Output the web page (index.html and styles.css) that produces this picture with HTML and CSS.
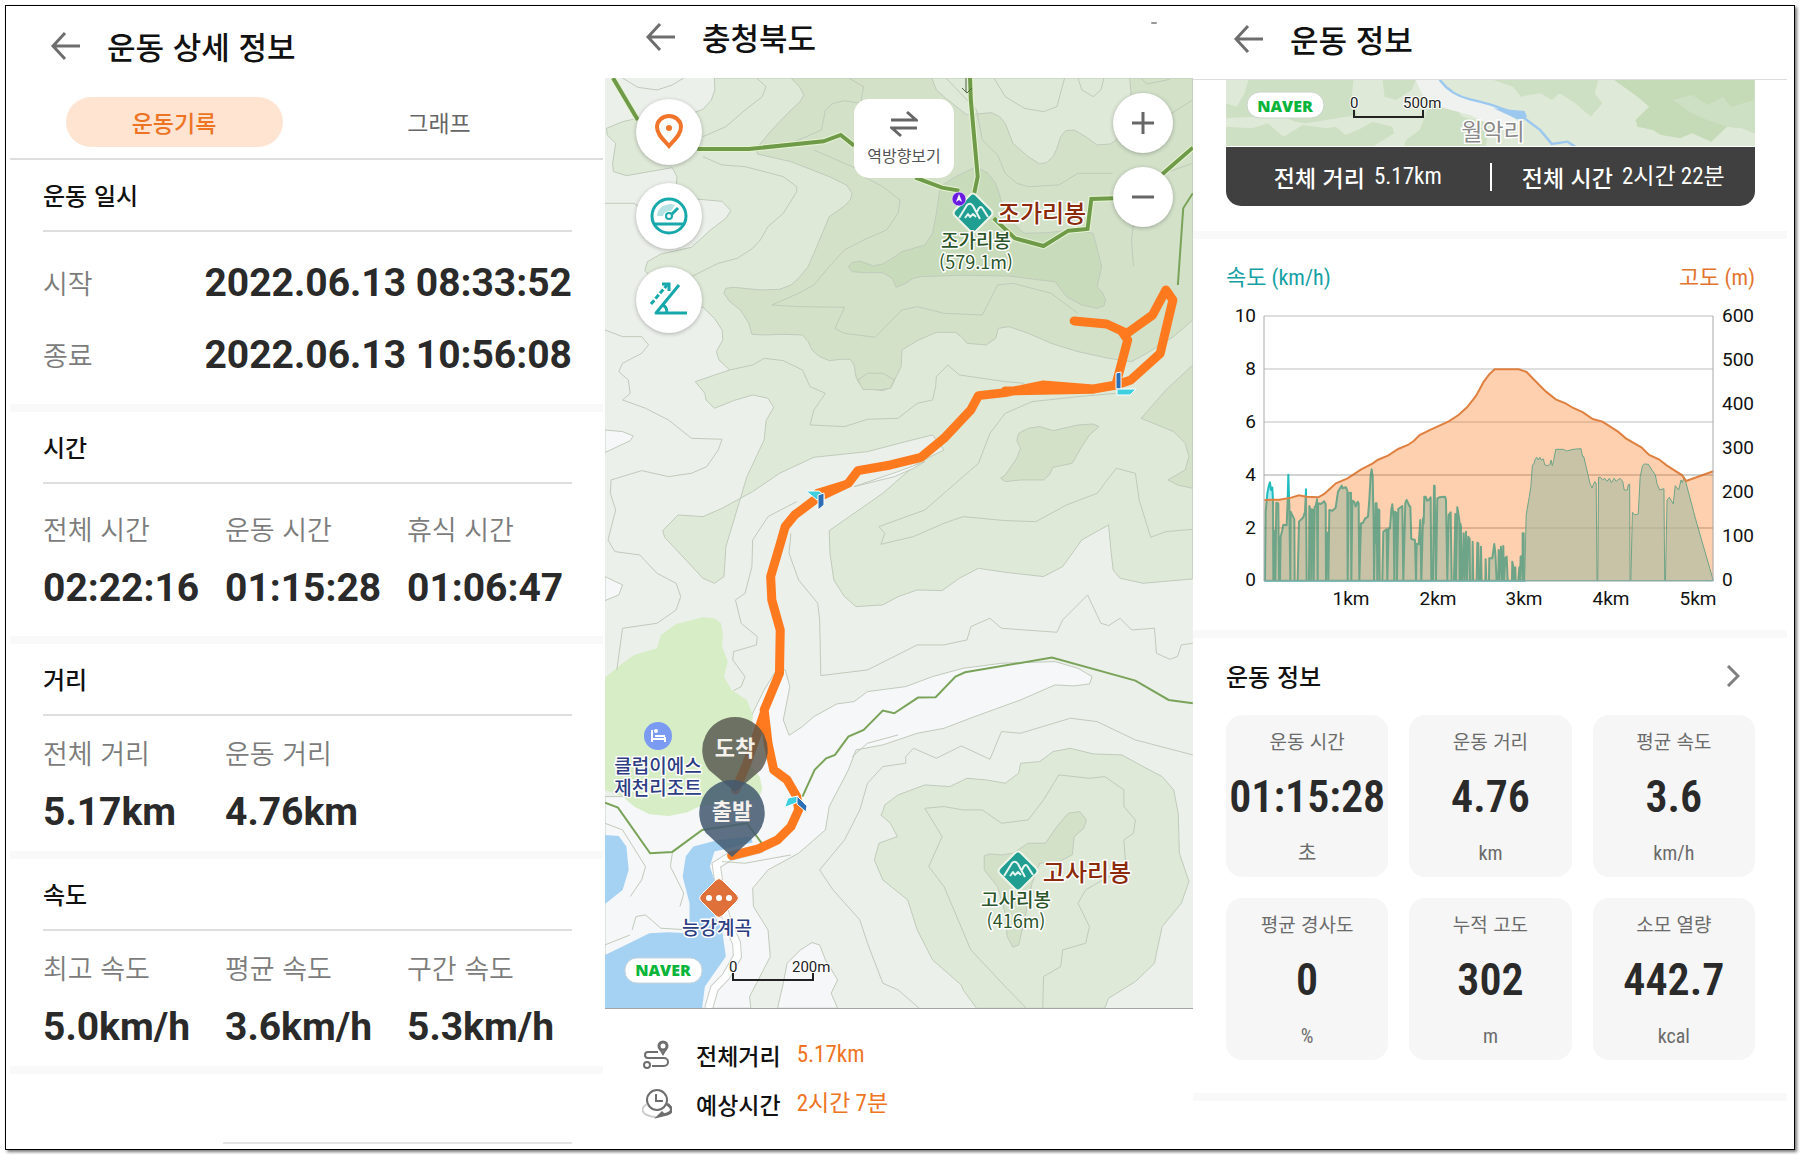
FILE: index.html
```html
<!DOCTYPE html>
<html lang="ko">
<head>
<meta charset="utf-8">
<title>운동 상세 정보</title>
<meta name="viewport" content="width=device-width, initial-scale=1">
<link rel="stylesheet" href="styles.css">
</head>
<body>
<svg class="defs" width="0" height="0" aria-hidden="true">
  <symbol id="back" viewBox="0 0 30 30"><path d="M29 15H2M14 2 2 15l12 13" fill="none" stroke="#6e6e6e" stroke-width="3"/></symbol>
  <symbol id="peak" viewBox="0 0 42 42">
    <path d="M18 3Q21 0 24 3L39 18Q42 21 39 24L24 39Q21 42 18 39L3 24Q0 21 3 18Z" fill="#1f9e91" stroke="#eef5e8" stroke-width="2"/>
    <path d="M7 26 15 13Q18 10 21 14L28 27M13 26l3-4 2 3 3-3 3 3M25 20Q28 12 31 17L36 25" fill="none" stroke="#e8f5f0" stroke-width="2" stroke-linejoin="round"/>
  </symbol>
</svg>
<main class="frame">
  <section class="panel detail">
    <header class="bar">
      <button class="back" type="button" aria-label="뒤로"><svg><use href="#back"/></svg></button>
      <h1>운동 상세 정보</h1>
    </header>
    <nav class="tabs">
      <button class="tab active" type="button">운동기록</button>
      <button class="tab" type="button">그래프</button>
    </nav>
    <section class="block">
      <h2>운동 일시</h2>
      <dl class="dates">
        <div><dt>시작</dt><dd>2022.06.13 08:33:52</dd></div>
        <div><dt>종료</dt><dd>2022.06.13 10:56:08</dd></div>
      </dl>
    </section>
    <section class="block">
      <h2>시간</h2>
      <dl class="stats roomy">
        <div><dt>전체 시간</dt><dd>02:22:16</dd></div>
        <div><dt>운동 시간</dt><dd>01:15:28</dd></div>
        <div><dt>휴식 시간</dt><dd>01:06:47</dd></div>
      </dl>
    </section>
    <section class="block">
      <h2>거리</h2>
      <dl class="stats">
        <div><dt>전체 거리</dt><dd>5.17km</dd></div>
        <div><dt>운동 거리</dt><dd>4.76km</dd></div>
      </dl>
    </section>
    <section class="block">
      <h2>속도</h2>
      <dl class="stats">
        <div><dt>최고 속도</dt><dd>5.0km/h</dd></div>
        <div><dt>평균 속도</dt><dd>3.6km/h</dd></div>
        <div><dt>구간 속도</dt><dd>5.3km/h</dd></div>
      </dl>
    </section>
    <div class="next"></div>
  </section>

  <section class="panel course">
    <header class="bar">
      <button class="back" type="button" aria-label="뒤로"><svg><use href="#back"/></svg></button>
      <h1>충청북도</h1>
      <span class="speck"></span>
    </header>
    <div class="map">
      <svg class="canvas" viewBox="0 0 588 930" preserveAspectRatio="xMidYMid slice">
        <rect width="588" height="930" fill="#ecf0ea"/>
        <g transform="translate(-5.4 -78) scale(.3827 .3333)" class="terrain">
          <path class="mid" d="M300 234 301 270 292 300 270 328 230 345 100 355 60 365 18 385 20 405 42 430 34 490 36 515 70 527 130 515 190 503 202 530 200 570 250 597 320 604 343 632 330 655 290 690 240 742 160 762 125 785 118 812 150 850 230 905 270 922 300 955 320 990 322 1020 305 1055 312 1080 340 1110 250 1145 275 1180 278 1200 300 1225 350 1202 400 1185 440 1195 455 1222 435 1262 430 1320 385 1430 330 1640 325 1730 300 1750 270 1735 170 1612 165 1592 205 1545 270 1550 320 1525 400 1475 470 1420 560 1372 700 1355 800 1325 870 1305 900 1350 830 1390 740 1480 640 1560 600 1592 602 1660 612 1740 640 1790 670 1820 740 1815 780 1790 830 1770 895 1772 940 1735 990 1705 1060 1717 1160 1730 1210 1700 1260 1620 1330 1575 1336 1650 1342 1710 1360 1735 1420 1750 1550 1737V234Z"/>
          <path class="dark" d="M500 234 522 260 534 285 524 305 500 330 450 390 410 445 412 462 500 485 600 530 645 555 660 580 655 600 640 618 600 650 582 700 560 760 545 800 520 835 500 855 470 868 420 870 350 862 330 865 325 880 340 905 368 930 390 970 398 1003 430 1005 480 1003 530 1005 545 1025 555 1050 575 1070 600 1082 630 1078 655 1078 665 1095 670 1130 678 1150 700 1165 740 1172 762 1162 775 1130 788 1100 790 1050 830 1022 880 997 930 997 945 1010 960 1030 1010 1035 1035 1015 1042 985 1070 980 1120 1000 1180 1030 1250 1055 1330 1075 1390 1085 1430 1060 1500 1010 1550 960V234H1385L1390 300 1380 370 1360 410 1335 432 1300 435 1270 410 1240 390 1218 392 1205 410 1195 445 1185 470 1168 488 1150 492 1120 470 1080 430 1070 400 1060 370 1045 350 1025 338 985 342 960 345 910 300 880 270 868 234Z"/>
          <path class="darker" d="M650 800 660 788 680 783 715 798 740 792 765 775 790 755 850 735 870 700 880 640 890 560 930 530 985 500 1015 520 1035 550 1055 620 1075 665 1110 700 1170 698 1240 690 1290 700 1312 800 1300 860 1315 880 1322 900 1318 918 1300 925 1260 915 1220 890 1190 845 1150 840 1070 828 940 826 840 830 820 835 800 850 775 862 765 835 740 818 690 818 660 815Z"/>
          <path class="dark" d="M1550 1095 1480 1170 1415 1255 1500 1295 1530 1330 1540 1370 1530 1410 1485 1440 1510 1455 1550 1465ZM675 1140 688 1168 730 1170 760 1165 770 1140 740 1120 700 1120ZM1090 1322 1095 1300 1120 1285 1150 1280 1185 1292 1250 1275 1290 1272 1305 1280 1280 1305 1260 1340 1235 1390 1185 1402 1175 1425 1160 1440 1100 1440 1060 1445 1048 1435 1060 1425 1090 1375 1100 1345Z"/>
          <path class="valley" d="M462 2010 485 2010 497 2060 480 2160 495 2206 530 2180 560 2150 620 2112 665 2105 700 2075 800 2060 870 2030 950 2005 1050 1990 1190 1985 1250 2005 1287 2030 1280 2052 1240 2058 1190 2055 1100 2100 980 2150 900 2185 830 2200 740 2235 670 2250 650 2310 600 2420 590 2490 520 2560 440 2610 400 2665 402 2720 440 2790 446 2870 410 2950 392 2990 395 3025H14V2390H330L400 2140 430 2070ZM555 2828 525 2850 490 2890 480 2950 465 3025H622L605 2980 622 2940 590 2880 575 2835ZM14 1290 60 1295 88 1308 80 1322 14 1358ZM14 1730 60 1755 50 1785 14 1802ZM665 1460 780 1415 850 1385 820 1405 770 1430Z"/>
          <path class="mid" d="M740 2435 745 2415 780 2385 850 2355 915 2360 960 2335 1010 2340 1060 2350 1095 2320 1100 2290 1150 2285 1185 2255 1230 2245 1290 2262 1365 2265 1420 2300 1470 2330 1500 2370 1512 2440 1515 2560 1540 2645 1520 2710 1470 2780 1455 2860 1450 2890 1400 2945 1330 2995 1320 3025H985L950 2970 945 2955 870 2880 830 2790 805 2700 740 2640 718 2580 730 2530 778 2510 760 2470 735 2445Z"/>
          <path class="dark" d="M1005 2568 1020 2562 1050 2565 1080 2560 1120 2530 1165 2530 1195 2480 1225 2440 1255 2435 1272 2460 1265 2485 1240 2510 1235 2565 1200 2585 1150 2590 1130 2650 1110 2760 1095 2835 1080 2842 1065 2810 1060 2740 1040 2660 1005 2610Z"/>
          <path class="resort" d="M270 1852 300 1855 317 1870 322 1900 320 1940 335 1985 325 2030 345 2070 385 2100 400 2145 395 2300 418 2330 425 2365 415 2400 260 2420 230 2437 180 2448 130 2443 90 2420 60 2390 14 2370V2033L60 1990 90 1965 150 1945 160 1905 200 1872Z"/>
          <path class="water" d="M14 2505 50 2508 70 2540 76 2610 60 2670 14 2712ZM395 2510 400 2528 300 2555 288 2600 300 2640 280 2700 320 2790 330 2870 275 2960 268 3025H14V2865L60 2840 130 2800 180 2797 235 2800V2710L217 2630 225 2570 245 2540 310 2520Z"/>
          <path d="M425 2545 340 2570 305 2595 318 2700 335 2770 358 2830 360 2870 330 2930 300 2965 285 3025" fill="none" stroke="#c8cdc5" stroke-width="9" vector-effect="non-scaling-stroke"/>
          <path d="M425 2545 340 2570 305 2595 318 2700 335 2770 358 2830 360 2870 330 2930 300 2965 285 3025" fill="none" stroke="#fff" stroke-width="7" vector-effect="non-scaling-stroke"/>
          <g class="contour">
            <path d="M60 234 100 262 150 270 190 255 220 234M410 234 435 260 425 290 380 330 330 380 270 410M650 234 690 260 682 310 640 302 610 310 590 330 580 390 500 430 440 440M1030 234 1060 290 1110 325 1160 335 1195 320 1215 234M1250 234 1260 270 1290 290 1310 270 1318 234M1415 234 1430 252 1490 238M905 234 985 330 1000 420 1040 465 1060 520 1090 550 1120 560 1200 555 1250 520 1340 520M1550 300 1480 350M1550 490 1450 530 1400 620 1390 720 1395 800M270 470 320 495 380 500 480 530 515 560 515 575 480 640 440 680 420 720 400 745 360 775 310 790 240 830M560 450 640 490 700 520M690 530 740 560 785 600 780 640 750 690 690 720 640 750 600 800 560 855 520 880 450 915 520 920 640 922 615 985 640 1000 720 1012 790 930 830 920 900 940 1000 945 1040 855 1080 850 1180 880 1250 940M14 610 90 610 130 640 170 620M14 990 60 1010 110 1010 128 1035 110 1060 60 1090 50 1115 75 1140 80 1180 60 1200 120 1225 180 1260 240 1315 320 1318 310 1350 280 1400 240 1420 180 1430 110 1412 30 1440 28 1480 42 1530 22 1620 40 1655 105 1665 150 1720 200 1750 212 1790 200 1830 150 1870 60 1885 45 2010M340 1110 400 1095 430 1075 480 1082 530 1110 550 1160 590 1180 560 1230 550 1275 640 1280 700 1258 780 1255 830 1210 870 1200 878 1160 880 1130 910 1095 940 1125 1060 1145 1110 1150M1350 1180 1250 1190 1130 1205 1060 1240 1020 1300 990 1390 930 1450 850 1530 730 1580 745 1600 735 1633 820 1610 900 1570 950 1550 1060 1562 1140 1565 1220 1515 1300 1480 1350 1405 1400 1420 1410 1500 1440 1612 1480 1595 1550 1588M515 1505 440 1550 400 1620 398 1700 380 1780 355 1800 370 1870 412 1910 410 1935 350 1955 348 1980 380 2030 370 2060 350 2072M500 1600 495 1660 520 1740 570 1810 575 1860 578 2027 700 2010 830 1935 900 1935 960 1920 970 1880 1020 1855 1050 1885 1195 1897 1210 1860 1275 1785 1310 1870 1330 1877 1360 1855 1390 1890 1450 1885 1455 1960 1490 1978 1510 1970 1520 1935 1550 1930M660 2270 700 2230 780 2205M800 2270 820 2245 880 2275 945 2238 1020 2278 1050 2195 1100 2200 1230 2155 1300 2165 1400 2220 1550 2265M800 2270 800 2290 740 2300 700 2350 680 2430 640 2520 575 2610 610 2670 680 2760 700 2830 740 2950 780 2970 835 3025M850 2425 900 2420 950 2430 1000 2430 1050 2470 1120 2460 1160 2400 1200 2325 1280 2335 1320 2330 1370 2370 1370 2420 1400 2460 1395 2500 1370 2520 1375 2600 1270 2670 1250 2710 1280 2780 1270 2830 1210 2850 1205 2900 1160 2930 1158 3025M850 2425 895 2510 860 2600 900 2660 970 2850 1060 2960 1115 3025M14 2470 60 2490 120 2600 110 2640 80 2690M85 2790 95 2750 120 2745 160 2785 235 2790M14 2835 80 2805M190 2560 185 2600 220 2680 210 2720M500 2565 380 2590 320 2585"/>
          </g>
          <g class="halo">
            <path d="M35 234 100 360M255 447H390L585 424 630 405 665 437M825 533 895 563 940 572M968 234 970 300 988 530 978 585M1030 655 1085 715 1160 738 1225 692 1275 687 1285 597 1345 595M1470 523 1550 443"/>
          </g>
          <g class="trail">
            <path d="M35 234 100 360M255 447H390L585 424 630 405 665 437M825 533 895 563 940 572M968 234 970 300 988 530 978 585M1030 655 1085 715 1160 738 1225 692 1275 687 1285 597 1345 595M1470 523 1550 443"/>
            <path class="thin" d="M1550 580 1525 625 1511 855M1550 2110 1487 2100 1400 2042 1182 1973 955 2017 930 2030 878 2092 832 2093 770 2140 740 2132 690 2190 650 2210 615 2265 592 2275 562 2310 530 2390M14 2408 48 2423 132 2560 190 2556 268 2490 385 2470 425 2532"/>
          </g>
          <path class="route" d="M345 2567 415 2547 465 2520 500 2480 520 2430 515 2390 490 2340 455 2310 440 2230 430 2130 470 2020 472 1890 450 1800 447 1730 475 1620 485 1580 510 1545 570 1493 650 1450 675 1412 760 1395 840 1372 900 1315 970 1230 990 1187 1060 1178 1160 1155 1290 1167 1350 1155 1388 1140 1465 1060 1498 900 1480 870 1445 945 1378 1000 1325 972 1240 963M1350 1150 1380 1020 1365 995M430 2140 385 2290 355 2370M570 1480 640 1455M1060 1173 1290 1168"/>
        </g>
        <g stroke="#fff" stroke-width="1">
          <path d="M511 295l5-1v17h-5z" fill="#2c6fb5"/><path d="M512 311h7l12 0-6 6h-13z" fill="#3fd0e0"/>
          <path d="M201 413h13l5 4v5h-7z" fill="#3fd0e0"/><path d="M213 417l6-2v12l-6 5z" fill="#2c6fb5"/>
          <path d="M180 728l3-8 10-2v6l-12 5z" fill="#3fd0e0"/><path d="M192 718l10 10-1 6-9-8z" fill="#2c6fb5"/>
        </g>
        <path d="M361 0v14M357 10l5 5 5-5" fill="none" stroke="#4c6340"/>
        <use href="#peak" x="347" y="114" width="42" height="42"/>
        <use href="#peak" x="392" y="772" width="42" height="42"/>
        <circle cx="354" cy="121" r="7" fill="#6a1be0" stroke="#fff" stroke-opacity=".6"/><path d="M354 116l3 8-3-2-3 2z" fill="#fff"/>
        <path d="M111 802q3-3 6 0l15 15q3 3 0 6l-15 15q-3 3-6 0l-15-15q-3-3 0-6z" fill="#e0703a" stroke="#fff"/>
        <g fill="#fff"><circle cx="104" cy="820" r="3"/><circle cx="114" cy="820" r="3"/><circle cx="124" cy="820" r="3"/></g>
        <circle cx="53" cy="658" r="14" fill="#7b9bf2"/>
        <path d="M47 652v12M60 659v5M47 661h13M50 658h10" fill="none" stroke="#fff" stroke-width="2"/><circle cx="51" cy="653" r="2" fill="#fff"/>
        <g class="label" text-anchor="middle">
          <text class="summit" x="437" y="144">조가리봉</text>
          <text class="green" x="371" y="170">조가리봉</text>
          <text class="green height" x="371" y="191">(579.1m)</text>
          <text class="summit" x="482" y="803">고사리봉</text>
          <text class="green" x="411" y="829">고사리봉</text>
          <text class="green height" x="411" y="850">(416m)</text>
          <text class="blue" x="53" y="695">클럽이에스</text>
          <text class="blue" x="53" y="717">제천리조트</text>
          <text class="blue" x="112" y="857">능강계곡</text>
        </g>
        <g class="pin" text-anchor="middle">
          <path d="M130 639a33 33 0 0 1 26 53L130 714 104 692a33 33 0 0 1 26-53z" fill="#55564d" fill-opacity=".82"/>
          <text x="130" y="678">도착</text>
          <path d="M127 702a33 33 0 0 1 26 53L127 779 101 755a33 33 0 0 1 26-53z" fill="#445a70" fill-opacity=".86"/>
          <text x="127" y="741">출발</text>
        </g>
        <rect x="20" y="880" width="77" height="25" rx="12" fill="#fff" stroke="#c9d3da"/>
        <text class="naver" x="58" y="898" text-anchor="middle">NAVER</text>
        <g class="scale"><path d="M128 895v7h80v-7"/><text x="124" y="894">0</text><text x="187" y="894">200m</text></g>
      </svg>
      <div class="tools left">
        <button class="round" type="button" aria-label="위치"><svg viewBox="0 0 40 40" width="40" height="40"><path d="M20 34C14 27 8 22 8 15a12 11 0 0 1 24 0c0 7-6 12-12 19z" fill="none" stroke="#f0752a" stroke-width="4"/><circle cx="20" cy="16" r="3" fill="#f0752a"/></svg></button>
        <button class="round" type="button" aria-label="속도"><svg viewBox="0 0 40 40" width="40" height="40"><path d="M8 20A13 12 0 0 1 26 9l-4 6a7 6 0 0 0-8 5z" fill="#b5e3e4"/><circle cx="20" cy="20" r="17" fill="none" stroke="#17a8ab" stroke-width="3"/><path d="M5 28h30M22 19l7-7" fill="none" stroke="#17a8ab" stroke-width="3"/><circle cx="20" cy="20" r="3" fill="#fff" stroke="#17a8ab" stroke-width="2"/></svg></button>
        <button class="round" type="button" aria-label="경사"><svg viewBox="0 0 40 40" width="40" height="40"><path d="M38 33H7L30 5M13 25q5 1 5 8" fill="none" stroke="#17a8ab" stroke-width="3" stroke-linejoin="round"/><path d="M2 24 18 5" fill="none" stroke="#17a8ab" stroke-width="3" stroke-dasharray="5 2"/><path d="M13 4h7v7" fill="none" stroke="#17a8ab" stroke-width="3"/></svg></button>
      </div>
      <button class="reverse" type="button"><svg viewBox="0 0 28 28" width="28" height="28"><path d="M1 10h25L17 2M27 18H2l9 8" fill="none" stroke="#666" stroke-width="3"/></svg>역방향보기</button>
      <div class="tools right">
        <button class="round small" type="button" aria-label="확대"><svg viewBox="0 0 24 24" width="24" height="24"><path d="M12 1v22M1 12h22" stroke="#666" stroke-width="3"/></svg></button>
        <button class="round small" type="button" aria-label="축소"><svg viewBox="0 0 24 24" width="24" height="24"><path d="M1 12h22" stroke="#666" stroke-width="3"/></svg></button>
      </div>
    </div>
    <dl class="summary">
      <div>
        <svg viewBox="0 0 30 30" width="30" height="30" fill="none" stroke="#6e6e6e" stroke-width="3"><circle cx="21" cy="6" r="4"/><path d="M18 9l3 5 3-5M16 12H6a3 3 0 0 0 0 6h16a4 4 0 0 1 0 8H10" stroke-width="2"/><circle cx="5" cy="25" r="3" stroke-width="2"/></svg>
        <dt>전체거리</dt><dd>5.17km</dd>
      </div>
      <div>
        <svg viewBox="0 0 30 30" width="30" height="30" fill="none" stroke="#6e6e6e" stroke-width="2"><circle cx="15" cy="11" r="10"/><path d="M14 5v7h7"/><path d="M5 15c-6 4-6 8 0 11q4 2 9 2" stroke="#ccc"/><path d="M25 15c6 4 6 8 0 10l-8 2 4-4" stroke-width="3"/></svg>
        <dt>예상시간</dt><dd>2시간 7분</dd>
      </div>
    </dl>
  </section>

  <section class="panel info">
    <header class="bar">
      <button class="back" type="button" aria-label="뒤로"><svg><use href="#back"/></svg></button>
      <h1>운동 정보</h1>
    </header>
    <div class="trip">
      <svg class="minimap" viewBox="0 0 529 66" preserveAspectRatio="xMidYMin slice">
        <rect width="529" height="67" fill="#dfe9d8"/>
        <g transform="translate(-36 -80) scale(.3891 .3333)">
          <g fill="#cee0c3">
            <path d="M150 240H420L415 300 430 345 350 360 300 370 270 365 205 330 170 350 93 355V310L120 320 140 280Z"/>
            <path d="M93 380 160 385 200 370 240 410 290 375 350 385 375 380 400 405 440 385 470 365 520 380 525 400 470 440H93ZM495 240H580L570 270 530 300 500 290ZM550 440 555 420 590 390 620 300 680 320 700 350 770 370 760 440Z"/>
            <path d="M780 240H1050L1040 280 1060 310 1030 350 990 310 950 280 930 300 900 280 850 290 830 260Z"/>
          </g>
          <path fill="#c5dab7" d="M1090 240H1451V400L1420 385 1380 380 1340 425 1290 400 1260 415 1210 405 1190 390 1150 380 1145 360 1180 320 1150 290Z"/>
          <path fill="#cee0c3" d="M1240 300 1290 285 1330 315 1370 290 1390 320 1451 300V400L1420 385 1380 380 1330 360 1290 340Z"/>
          <path fill="#eff2ef" d="M580 240H640L680 285 790 320 850 370 800 390 720 345 640 320 600 290Z"/>
          <path d="M642 240Q670 285 720 298T800 325Q840 340 860 355L900 390 930 432 970 425 990 440" fill="none" stroke="#9cc8f0" stroke-width="7"/>
          <path d="M780 325 860 333 866 350 850 362 830 352Z" fill="#9cc8f0"/>
        </g>
        <rect x="21" y="12" width="77" height="26" rx="13" fill="#fff" stroke="#c9d3c9"/>
        <text class="naver" x="59" y="32" text-anchor="middle">NAVER</text>
        <g class="scale"><path d="M128 30v7h69v-7"/><text x="124" y="28">0</text><text x="177" y="28">500m</text></g>
        <text class="village" x="267" y="60" text-anchor="middle">월악리</text>
      </svg>
      <dl class="totals">
        <div><dt>전체 거리</dt><dd>5.17km</dd></div>
        <div><dt>전체 시간</dt><dd>2시간 22분</dd></div>
      </dl>
    </div>
    <div class="band"></div>
    <figure class="chart">
      <figcaption><span class="speed">속도 (km/h)</span><span class="alt">고도 (m)</span></figcaption>
      <svg viewBox="0 0 529 319">
        <g stroke="#dedede" stroke-width="2"><path d="M38 23H487M38 76H487M38 129H487M38 182H487M38 235H487"/></g>
        <g fill="#abebf2" stroke="#21bcc0" stroke-width="2" stroke-linejoin="round">
          <path transform="translate(24 147) scale(.3333)" vector-effect="non-scaling-stroke" d="M45 422 47 215 52 160 57 135 60 127 63 150 67 143 69 180 70 422 71 272 75 272 76 422 79 188 85 190 87 422H90L92 290 97 270 100 254 110 256 113 180 115 104 118 200 121 422 122 215 133 238 134 422H143L147 245 160 232 165 215 168 148 170 422H177L178 198 182 210 184 422 186 208 190 210 191 422 194 200 197 200 201 178 203 422 204 190 212 192 218 188 222 184 227 192 228 422 231 278 234 278 235 422 238 210 247 212 257 203 264 155 275 137 278 145 288 142 292 152 293 422 296 160 303 158 304 422 307 182 313 186 317 200 323 185 326 190 328 422 333 250 338 250 346 235 354 230 358 180 362 105 365 88 368 110 371 250 372 422 374 308 376 308 377 190 380 190 382 422 385 208 388 210 389 422H397L400 275 410 268 412 422 416 265 420 265 424 210 427 193 431 240 433 422 435 215 440 220 441 422 445 207 457 198 460 422 466 190 470 180 478 198 481 200 484 297 495 300 498 422 500 312 506 313 511 240 514 422 519 235 521 250 523 170 527 170 531 182 536 180 542 172 544 422H549L552 137H554L558 422 562 175 568 172 585 170 588 180 592 422 596 225 602 217 605 422H612L616 222 618 422 622 202 628 240 629 422 631 250 633 260 634 422H637L641 280 644 422 648 275 651 422 655 290 659 297 660 422H667L668 305 670 422H680L682 308 685 310 687 422H692L693 320 695 422H706L707 358 709 422H717L718 355 727 355 733 312 736 340 740 422H745L746 330 748 422 753 320 756 422 760 318 762 422 766 355 770 350 773 422H786L787 365 790 380 791 422H795L796 382 797 422H805L808 382 810 422 812 350 816 348 818 422V280H821L822 422 825 422Z"/>
          <path stroke-width="1" transform="translate(-36 -33) scale(.3891 .3333)" vector-effect="non-scaling-stroke" d="M860 962 864 765 872 710 876 680 880 615 884 612 887 598 891 592 895 600 899 592 903 600 908 597 912 615 920 617 925 613 928 600 931 617 934 605 940 568 960 568 968 573 985 568 1005 566 1009 590 1012 590 1022 640 1028 670 1033 684 1040 665 1044 670 1046 962H1048L1050 652 1055 652 1060 660 1066 655 1072 664 1078 655 1083 668 1090 655 1095 664 1105 655 1112 664 1116 690 1124 690 1126 675 1130 672 1131 962H1133L1137 757 1143 765 1152 762 1157 650 1163 617 1168 612 1178 613 1190 635 1196 645 1200 670 1207 690 1218 686 1220 962H1222L1226 720 1232 712 1242 732 1247 677 1256 690 1262 660 1265 668 1270 652 1275 670 1300 780 1345 962Z"/>
        </g>
        <g transform="translate(-36 -33) scale(.3891 .3333)">
          <path fill="#ff781e" fill-opacity=".35" d="M191 720 230 719 260 713 280 706 300 710 330 712 345 702 375 670 405 655 440 628 470 610 482 600 510 586 535 567 560 555 575 543 590 525 620 508 665 484 690 465 712 442 735 408 755 365 770 342 783 328 845 328 865 336 885 360 915 395 940 418 965 430 985 444 1010 457 1035 477 1060 485 1100 515 1120 535 1160 562 1180 585 1205 598 1225 616 1265 646 1275 663 1345 634V962H191Z"/>
          <path fill="none" stroke="#e08040" stroke-width="2" vector-effect="non-scaling-stroke" d="M191 720 230 719 260 713 280 706 300 710 330 712 345 702 375 670 405 655 440 628 470 610 482 600 510 586 535 567 560 555 575 543 590 525 620 508 665 484 690 465 712 442 735 408 755 365 770 342 783 328 845 328 865 336 885 360 915 395 940 418 965 430 985 444 1010 457 1035 477 1060 485 1100 515 1120 535 1160 562 1180 585 1205 598 1225 616 1265 646 1275 663 1345 634"/>
        </g>
        <path d="M38 23V288H487V23" fill="none" stroke="#a9a9a9"/>
        <path d="M38 182H487M38 235H487" stroke="#000" stroke-opacity=".1"/>
        <g class="axis">
          <g text-anchor="end"><text x="30" y="29">10</text><text x="30" y="82">8</text><text x="30" y="135">6</text><text x="30" y="188">4</text><text x="30" y="241">2</text><text x="30" y="293">0</text></g>
          <g><text x="496" y="29">600</text><text x="496" y="73">500</text><text x="496" y="117">400</text><text x="496" y="161">300</text><text x="496" y="205">200</text><text x="496" y="249">100</text><text x="496" y="293">0</text></g>
          <g text-anchor="middle"><text x="125" y="312">1km</text><text x="212" y="312">2km</text><text x="298" y="312">3km</text><text x="385" y="312">4km</text><text x="472" y="312">5km</text></g>
        </g>
      </svg>
    </figure>
    <div class="band"></div>
    <section class="metrics">
      <header>
        <h2>운동 정보</h2>
        <a class="more" href="#detail" aria-label="더 보기"><svg viewBox="0 0 14 22" width="14" height="22"><path d="M2 1l10 10L2 21" fill="none" stroke="#808080" stroke-width="3"/></svg></a>
      </header>
      <dl class="cards">
        <div><dt>운동 시간</dt><dd>01:15:28</dd><dd class="unit">초</dd></div>
        <div><dt>운동 거리</dt><dd>4.76</dd><dd class="unit">km</dd></div>
        <div><dt>평균 속도</dt><dd>3.6</dd><dd class="unit">km/h</dd></div>
        <div><dt>평균 경사도</dt><dd>0</dd><dd class="unit">%</dd></div>
        <div><dt>누적 고도</dt><dd>302</dd><dd class="unit">m</dd></div>
        <div><dt>소모 열량</dt><dd>442.7</dd><dd class="unit">kcal</dd></div>
      </dl>
    </section>
    <div class="band"></div>
  </section>
</main>
</body>
</html>
```
FILE: styles.css
```css
* { box-sizing: border-box; margin: 0; }
:root {
  --kr: "Noto Sans CJK KR", sans-serif;
  --num: Roboto, "Noto Sans CJK KR", sans-serif;
  --narrow: "Roboto Condensed", "Liberation Sans Narrow", "Noto Sans CJK KR", sans-serif;
}
body { padding: 5px; background: #fff; color: #111; font-family: var(--kr); }
button { padding: 0; border: 0; background: none; color: inherit; font: inherit; }
svg { display: block; }
.defs { position: absolute; }

.frame {
  display: grid;
  grid-template-columns: 599fr 588fr 601fr;
  min-height: calc(100vh - 10px);
  border: 1px solid #000;
  box-shadow: 2px 2px 3px #777;
}
.panel { display: flex; flex-direction: column; min-width: 0; }
.bar { display: flex; align-items: center; gap: 26px; height: 72px; padding-left: 41px; }
.back, .back svg { width: 30px; height: 30px; }
h1 { font-size: 31px; font-weight: 500; line-height: 40px; }
h2 { font-size: 24px; font-weight: 500; }
dt { font-weight: 400; }

/* workout record */
.detail { padding: 0 2px 0 4px; }
.detail .bar { height: 81px; padding: 0 0 2px 41px; }
.tabs { display: grid; grid-template-columns: 217px 217px; gap: 48px; justify-content: center; padding: 10px 0 11px; border-bottom: 2px solid #dedede; }
.tab { height: 50px; border-radius: 25px; color: #666; font-size: 23px; }
.tab.active { background: #ffe4d2; color: #ee7424; font-weight: 500; }
.block { padding: 0 31px 0 33px; border-bottom: 8px solid #f9f9f9; }
.block h2 { height: 72px; line-height: 70px; border-bottom: 2px solid #dedede; }
.block dt { color: #7c7c7c; font-size: 27px; font-weight: 350; line-height: 36px; }
.block dd { color: #2a2a2a; font: 700 39px/48px var(--num); }
.dates { padding: 15px 0 13px; }
.dates div { display: flex; align-items: center; justify-content: space-between; height: 72px; }
.stats { display: grid; grid-template-columns: repeat(3, 182px); padding: 19px 0 15px; }
.stats.roomy { padding: 27px 0 24px; }
.stats div { display: grid; gap: 17px; white-space: nowrap; }
.next { flex: 1; margin: 0 31px 5px 213px; border-bottom: 2px solid #e4e4e4; }

/* course map */
.course .bar { padding-bottom: 10px; }
.speck { align-self: flex-start; width: 6px; height: 2px; margin: 16px 36px 0 auto; border-radius: 2px; background: #999; }
.map { position: relative; flex: 1; min-height: 600px; border-bottom: 1px solid #a5a5a5; overflow: hidden; }
.canvas { position: absolute; inset: 0; width: 100%; height: 100%; }
.mid { fill: #dfe9d8; }
.dark { fill: #d3e1c9; }
.darker { fill: #c8dbbb; }
.valley { fill: #f6f7f8; }
.resort { fill: #d6edc5; }
.water { fill: #a5d2f3; }
.terrain .mid, .terrain .dark, .terrain .darker, .terrain .valley, .contour path { stroke: #c0cbbb; stroke-width: 1; vector-effect: non-scaling-stroke; stroke-linejoin: round; }
.contour path { fill: none; }
.halo path { fill: none; stroke: #e6f4d4; stroke-width: 6; vector-effect: non-scaling-stroke; }
.trail path { fill: none; stroke: #6f9b48; stroke-width: 4; vector-effect: non-scaling-stroke; }
.trail .thin { stroke: #7aa35a; stroke-width: 2; }
.route { fill: none; stroke: #ff7a1f; stroke-width: 9; stroke-linejoin: round; stroke-linecap: round; vector-effect: non-scaling-stroke; }
.label text { font-size: 19px; font-weight: 500; paint-order: stroke; stroke: #fff; stroke-width: 3px; stroke-linejoin: round; }
.label .summit { font-size: 24px; fill: #8c2a0c; }
.label .green { fill: #2b552a; }
.label .height { font-size: 18px; font-weight: 400; }
.label .blue { fill: #2d3d82; }
.pin text { font-size: 22px; font-weight: 700; fill: #f4f1ec; }
.naver { font: 800 16px "Open Sans", sans-serif; fill: #0bb53c; }
.scale text { font: 400 15px var(--num); fill: #222; paint-order: stroke; stroke: #fff; stroke-width: 2px; }
.scale path { fill: none; stroke: #222; stroke-width: 2; }
.village { font-size: 23px; fill: #8a8a8a; paint-order: stroke; stroke: #fff; stroke-width: 3px; }
.tools { position: absolute; display: grid; }
.tools.left { top: 21px; left: 31px; gap: 18px; }
.tools.right { top: 15px; right: 20px; gap: 14px; }
.round { display: grid; place-items: center; width: 66px; height: 66px; border-radius: 50%; background: #fff; box-shadow: 0 1px 4px #0004; }
.round.small { width: 60px; height: 60px; }
.reverse { position: absolute; top: 21px; left: calc(50% - 45px); display: flex; flex-direction: column; align-items: center; justify-content: center; gap: 5px; width: 100px; height: 79px; border-radius: 15px; background: #fff; color: #555; font-size: 16px; line-height: 24px; }
.summary { display: grid; align-content: start; gap: 17px; height: 140px; padding: 30px 37px 0; }
.summary div { display: flex; align-items: center; height: 32px; }
.summary dt { margin: 0 16px 0 24px; color: #111; font-size: 23px; font-weight: 500; line-height: 32px; }
.summary dd { color: #ee7424; font: 400 23px/32px var(--narrow); }

/* workout summary */
.info .bar { height: 74px; margin-right: 7px; padding-bottom: 7px; border-bottom: 1px solid #dcdcdc; }
.trip { margin: 0 39px 25px 33px; border-radius: 0 0 15px 15px; background: #404040; overflow: hidden; }
.minimap { width: 100%; border-bottom: 1px solid #fff; }
.totals { display: flex; height: 59px; padding: 16px 0 15px; color: #fff; }
.totals div { display: flex; flex: 1; align-items: center; justify-content: center; gap: 9px; font-size: 23px; line-height: 28px; white-space: nowrap; }
.totals div + div { border-left: 2px solid #fff; }
.totals dt { font-weight: 500; }
.totals dd { font-family: var(--narrow); }
.band { height: 8px; margin-right: 7px; background: #f9f9f9; }
.chart { padding: 24px 39px 18px 33px; }
.chart svg { width: 100%; }
figcaption { display: flex; justify-content: space-between; font: 400 22px/30px var(--narrow); }
.speed { color: #14a0a4; }
.alt { color: #e27430; }
.axis text { font: 400 19px var(--num); fill: #111; }
.metrics { padding: 0 39px 33px 33px; }
.metrics header { display: flex; align-items: center; justify-content: space-between; height: 77px; padding: 0 15px 2px 0; }
.cards { display: grid; grid-template-columns: repeat(3, minmax(0, 1fr)); gap: 21px; }
.cards div { display: grid; gap: 14px; justify-items: center; padding: 12px 0 10px; border-radius: 16px; background: #f6f6f6; }
.cards dt { color: #6b6b6b; font-size: 19px; line-height: 28px; }
.cards dd { color: #2a2a2a; font: 600 44px/56px var(--narrow); }
.cards .unit { color: #6b6b6b; font: 400 20px/28px var(--narrow); }
```
